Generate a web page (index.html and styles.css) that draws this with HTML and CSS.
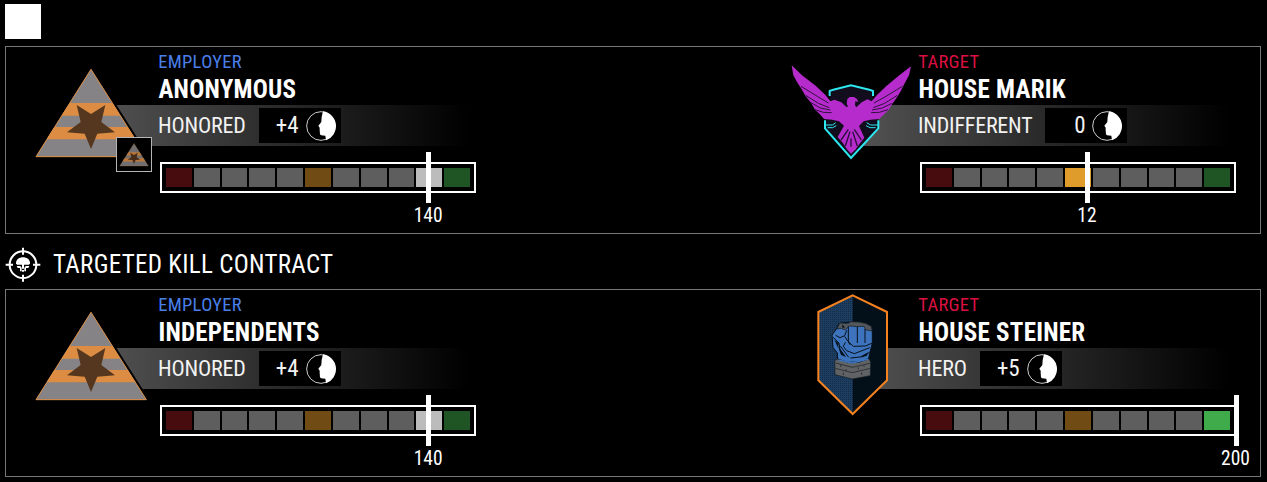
FILE: index.html
```html
<!DOCTYPE html>
<html lang="en">
<head>
<meta charset="UTF-8">
<meta name="viewport" content="width=device-width, initial-scale=1.0">
<title>Contracts</title>
<link rel="stylesheet" href="styles.css">
</head>
<body>

<!-- Shared symbols -->
<svg class="defs" width="0" height="0">
  <symbol id="independents" viewBox="93 36 360 360">
    <polygon points="273,87 107,351 440,351" fill="#858386" stroke="#000" stroke-width="14"/>
    <polygon points="273,87 107,351 440,351" fill="#858386"/>
    <polygon points="209,189 337,189 361,227 185,227" fill="#dc8d43"/>
    <polygon points="163,261 383,261 406,298 140,298" fill="#dc8d43"/>
    <polygon points="273,88 108,350 439,350" fill="none" stroke="#dc8d43" stroke-width="3"/>
    <polygon points="230,195 273,222 316,195 304,246 345,277 292,281 273,327 254,281 201,277 242,246" fill="#55371f"/>
  </symbol>

  <symbol id="head" viewBox="30 33 90 90">
    <circle cx="75" cy="78" r="43" fill="#000" stroke="#ccc" stroke-width="3"/>
    <path d="M81 34 L77 51 L76 66 L67 77 L71 83 L71 90 L72 103 L75 106 L88 107 L90 121 A45 45 0 0 0 81 34 Z" fill="#fff"/>
  </symbol>
</svg>

<div class="contract">
  <div class="contract-header">
    <div class="blank-icon"></div>
  </div>
  <div class="panel">
    <div class="faction">
      <div class="emblem">
        <svg width="120" height="120"><use href="#independents"/></svg>
        <div class="badge"><svg width="32" height="31"><use href="#independents"/></svg></div>
      </div>
      <div class="info">
        <div class="role employer">EMPLOYER</div>
        <div class="name">ANONYMOUS</div>
        <div class="rank">
          <span>HONORED</span>
          <div class="rep">+4 <svg width="30" height="30"><use href="#head"/></svg></div>
        </div>
        <div class="meter">
          <div class="bar">
            <i class="red"></i><i></i><i></i><i></i><i></i><i class="gold"></i><i></i><i></i><i></i><i class="lit"></i><i class="green"></i>
          </div>
          <div class="marker" style="left: 85%"><span>140</span></div>
        </div>
      </div>
    </div>

    <div class="faction">
      <div class="emblem">
        <!-- Marik eagle -->
        <svg width="120" height="120" viewBox="33 36 360 360">
          <path d="M148 150 L213 135 L279 152 L280 190 L297 242 L297 266 L213 355 L133 266 L133 242 L148 190 Z" fill="#110d1d"/>
          <path d="M149 168 V153 L160 149 L213 136 L268 149 L279 153 V168" fill="none" stroke="#2de8ef" stroke-width="6"/>
          <path d="M135 241 V265 L213 354 L295 265 V241" fill="none" stroke="#2de8ef" stroke-width="6"/>
          <path d="M135 255 H158 L167 248 M143 263 H158 L169 257 M295 255 H272 L260 248 M287 263 H270 L258 257" fill="none" stroke="#2de8ef" stroke-width="3"/>
          <path d="M35 76 L66 106 L107 137 L137 166 L151 184 L163 179 L184 187 L200 202 L204 198 L200 192 L202 177 L209 171 L222 171 L231 177 L235 186 L226 184 L225 196 L229 202 L245 187 L262 178 L275 184 L290 166 L320 137 L358 106 L393 79 L387 106 L371 136 L363 152 L350 173 L334 196 L325 211 L309 226 L297 237 L271 239 L251 244 L237 258 L253 293 L240 310 L226 329 L213 341 L202 329 L188 308 L173 291 L192 257 L177 244 L156 239 L132 237 L119 222 L105 209 L93 188 L77 169 L64 146 L51 126 L40 106 Z" fill="#b52bcb"/>
          <path d="M63 139 L112 169 L145 189 M77 166 L115 190 L148 203 M93 188 L121 204 L151 210 M105 209 L130 217 L155 218 M367 139 L318 169 L282 189 M352 166 L314 190 L280 203 M335 190 L307 204 L276 210 M324 209 L298 217 L273 218" fill="none" stroke="#321140" stroke-width="3"/>
          <path d="M205 268 L183 300 M210 275 L196 318 M213 295 V320 M218 275 L232 318 M223 268 L244 300" fill="none" stroke="#28103a" stroke-width="4"/>
        </svg>
      </div>
      <div class="info">
        <div class="role target">TARGET</div>
        <div class="name">HOUSE MARIK</div>
        <div class="rank">
          <span>INDIFFERENT</span>
          <div class="rep">0 <svg width="30" height="30"><use href="#head"/></svg></div>
        </div>
        <div class="meter">
          <div class="bar">
            <i class="red"></i><i></i><i></i><i></i><i></i><i class="gold lit"></i><i></i><i></i><i></i><i></i><i class="green"></i>
          </div>
          <div class="marker" style="left: 53%"><span>12</span></div>
        </div>
      </div>
    </div>
  </div>
</div>

<div class="contract">
  <div class="contract-header">
    <!-- Skull in crosshair -->
    <svg width="35" height="35" viewBox="15 9 105 105">
      <circle cx="69" cy="62" r="40" fill="none" stroke="#fff" stroke-width="6"/>
      <path d="M69 11 V32 M69 92 V113 M17 62 H39 M99 62 H121" stroke="#fff" stroke-width="6"/>
      <path d="M48 58 C48 46 58 40 69 40 C80 40 90 46 90 58 L87 62 H51 Z" fill="#fff"/>
      <path d="M50 66 H62 V72 H53 Z M76 66 H88 L85 72 H76 Z M66 60 H72 V74 H66 Z M60 70 H65 V82 H60 Z M73 70 H78 V82 H73 Z M66 78 H72 V83 H66 Z" fill="#fff"/>
    </svg>
    <h2>TARGETED KILL CONTRACT</h2>
  </div>
  <div class="panel">
    <div class="faction">
      <div class="emblem">
        <svg width="120" height="120"><use href="#independents"/></svg>
      </div>
      <div class="info">
        <div class="role employer">EMPLOYER</div>
        <div class="name">INDEPENDENTS</div>
        <div class="rank">
          <span>HONORED</span>
          <div class="rep">+4 <svg width="30" height="30"><use href="#head"/></svg></div>
        </div>
        <div class="meter">
          <div class="bar">
            <i class="red"></i><i></i><i></i><i></i><i></i><i class="gold"></i><i></i><i></i><i></i><i class="lit"></i><i class="green"></i>
          </div>
          <div class="marker" style="left: 85%"><span>140</span></div>
        </div>
      </div>
    </div>

    <div class="faction">
      <div class="emblem">
        <!-- Steiner fist -->
        <svg width="120" height="120" viewBox="3 30 360 360">
          <defs>
            <pattern id="weave" width="6" height="6" patternUnits="userSpaceOnUse">
              <rect width="6" height="6" fill="#1d3e60"/>
              <rect width="3" height="3" fill="#122b45"/>
            </pattern>
          </defs>
          <polygon points="188,31 291,81 291,286 188,387 85,286 85,81" fill="#031019"/>
          <polygon points="188,31 188,387 85,286 85,81" fill="url(#weave)"/>
          <polygon points="188,31 291,81 291,286 188,387 85,286 85,81" fill="none" stroke="#f5821f" stroke-width="6"/>
          <path d="M134 228 L142 221 L187 234 L238 222 L242 232 L241 272 L187 282 L135 269 Z" fill="#606263" stroke="#111a22" stroke-width="2"/>
          <path d="M137 234 L187 247 L240 235 M136 250 L187 263 L241 250 M152 240 V246 M168 252 V258 M205 247 V253 M222 241 V246 M160 262 V270 M215 262 V270" fill="none" stroke="#151d24" stroke-width="2"/>
          <path d="M126 150 L137 135 L146 117 L158 113 L180 112 L210 110 L238 119 L247 132 L247 174 L239 206 L236 220 L210 231 L174 232 L143 222 L142 204 L129 187 Z" fill="#3d74bd" stroke="#07111c" stroke-width="3"/>
          <path d="M141 132 L149 114 L174 116 L182 110 L203 111 L226 115 L244 124 L246 138 L226 134 L222 124 L203 125 L177 123 L166 135 L153 130 Z" fill="#53575c" stroke="#14191f" stroke-width="2"/>
          <path d="M175 125 V171 L181 180 M202 125 V174 M225 132 V174 M170 136 L164 152 L150 158 L137 151 M164 154 L173 168 L190 184 L226 183 L247 174 M166 172 L160 184 L170 197 L193 206 L239 188 M129 157 L147 174 L150 195 L164 214 M151 183 L176 217 M181 219 L220 215 L239 201" fill="none" stroke="#07111c" stroke-width="3"/>
          <path d="M144 183 L168 215 L153 210 Z M133 164 L146 175 L144 188 Z M209 215 L235 202 L230 213 Z M158 118 L165 130 L156 127 Z" fill="#07111c"/>
          <path d="M146 225 L187 234 L235 222" fill="none" stroke="#3d74bd" stroke-width="4"/>
        </svg>
      </div>
      <div class="info">
        <div class="role target">TARGET</div>
        <div class="name">HOUSE STEINER</div>
        <div class="rank">
          <span>HERO</span>
          <div class="rep">+5 <svg width="30" height="30"><use href="#head"/></svg></div>
        </div>
        <div class="meter">
          <div class="bar">
            <i class="red"></i><i></i><i></i><i></i><i></i><i class="gold"></i><i></i><i></i><i></i><i></i><i class="green lit"></i>
          </div>
          <div class="marker" style="left: 100%"><span>200</span></div>
        </div>
      </div>
    </div>
  </div>
</div>

</body>
</html>
```
FILE: styles.css
```css
* {
  box-sizing: border-box;
}

body {
  margin: 0;
  padding: 4px 6px 0 5px;
  background-color: #000;
  color: #fff;
  font-family: "Roboto Condensed", Roboto, sans-serif;
  font-stretch: 75%;
  overflow: hidden;
}

svg {
  display: block;
  overflow: visible;
}

.defs {
  position: absolute;
}

.contract {
  margin-bottom: 13px;
}

.contract-header {
  display: flex;
  align-items: center;
  gap: 13px;
  height: 35px;
  margin-bottom: 7px;
}

.blank-icon {
  width: 36px;
  height: 35px;
  background-color: #fff;
}

h2 {
  margin: 0;
  font-size: 25px;
  font-weight: 400;
  letter-spacing: 0.3px;
  line-height: 35px;
}

.panel {
  display: grid;
  grid-template-columns: 760px 1fr;
  height: 188px;
  border: 1px solid #777;
  padding: 4px 0 0 25px;
}

.faction {
  display: flex;
  gap: 7px;
}

.emblem {
  position: relative;
  z-index: 1;
  width: 120px;
  height: 120px;
  margin-top: 1px;
}

/* Small parent faction icon in the emblem corner */
.badge {
  position: absolute;
  left: 85px;
  top: 85px;
  width: 36px;
  height: 35px;
  padding: 1px;
  background-color: #000;
  border: 1px solid #b5b5b5;
}

.badge svg {
  opacity: 0.85;
}

.info {
  width: 318px;
}

.role {
  padding-left: 0.3px;
  font-size: 18.5px;
  line-height: 22px;
  letter-spacing: 0.3px;
}

.employer {
  color: #4a7fe8;
}

.target {
  color: #dc1040;
}

.name {
  padding: 1px 0 0 0.4px;
  font-size: 25px;
  font-weight: 700;
  line-height: 31px;
  letter-spacing: 0.25px;
}

/* Starts behind the emblem */
.rank {
  display: flex;
  align-items: center;
  gap: 13px;
  height: 41px;
  margin-left: -67px;
  padding-left: 67px;
  background: linear-gradient(to right, #545454, #000 98%);
  color: #f2f2f2;
  font-size: 22px;
  letter-spacing: -0.2px;
}

.rep {
  display: flex;
  align-items: center;
  justify-content: flex-end;
  gap: 7px;
  width: 82px;
  height: 35px;
  padding-right: 5px;
  background-color: #000;
  font-size: 23px;
  letter-spacing: 0;
}

.meter {
  position: relative;
  width: 316px;
  margin: 16px 0 0 2px;
}

.bar {
  display: flex;
  gap: 2px;
  height: 31px;
  padding: 4px;
  border: 2px solid #fff;
}

.bar i {
  flex: 1;
  background-color: #5e5e5e;
}

.bar .lit {
  background-color: #bcbcbc;
}

.bar .red {
  background-color: #460c0e;
}

.bar .gold {
  background-color: #704c14;
}

.bar .gold.lit {
  background-color: #e09c2a;
}

.bar .green {
  background-color: #1f5524;
}

.bar .green.lit {
  background-color: #3fab4a;
}

.marker {
  position: absolute;
  top: -10px;
  width: 5px;
  height: 51px;
  margin-left: -2.5px;
  background-color: #fff;
}

.marker span {
  position: absolute;
  top: 100%;
  left: 50%;
  transform: translateX(-50%);
  margin-left: -0.5px;
  font-size: 19.5px;
  line-height: 26px;
}
```
